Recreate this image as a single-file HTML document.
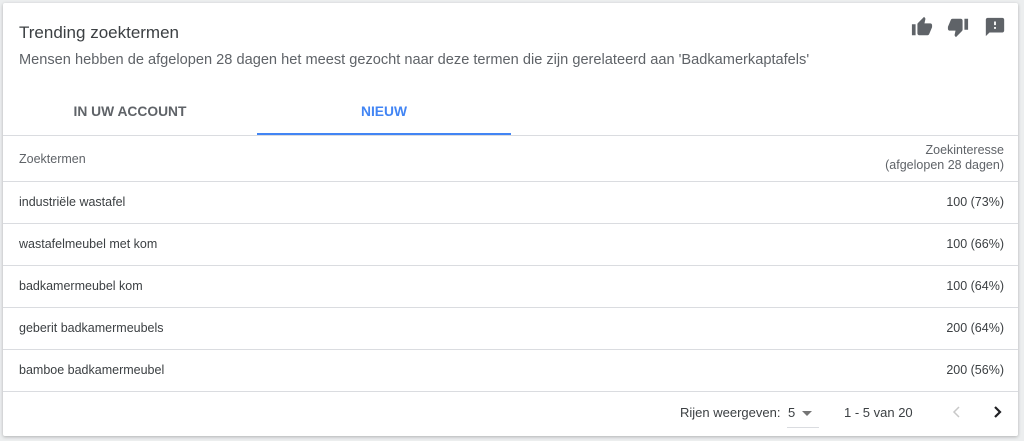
<!DOCTYPE html>
<html><head><style>
*{margin:0;padding:0;box-sizing:border-box}
body{width:1024px;height:441px;background:#eceeef;font-family:"Liberation Sans",sans-serif;position:relative;overflow:hidden}
.card{position:absolute;left:3px;top:3px;width:1015px;height:433px;background:#fff;box-shadow:0 1px 3px rgba(0,0,0,.25);border-radius:2px}
.abs{position:absolute;white-space:nowrap}
.t{left:16px;top:20px;font-size:17px;color:#3c4043}
.s{left:16px;top:49px;font-size:14.6px;color:#5f6368}
.tab{top:101px;font-size:13.8px;font-weight:bold;color:#5f6368;width:254px;text-align:center}
.ul{left:254px;top:130px;width:254px;height:2px;background:#4285f4}
.hr{position:absolute;left:0;width:1015px;height:1px;background:#dadce0}
.cell{font-size:12.5px;color:#3c4043}
.l{left:16px}.r{right:14px;text-align:right}
.ic{position:absolute;top:13px}
</style></head><body>
<div class="card">
<div class="abs t">Trending zoektermen</div>
<div class="abs s">Mensen hebben de afgelopen 28 dagen het meest gezocht naar deze termen die zijn gerelateerd aan 'Badkamerkaptafels'</div>
<svg class="ic" style="left:908px" width="22" height="22" viewBox="0 0 24 24"><path fill="#5f6368" d="M1 21h4V9H1v12zm22-11c0-1.1-.9-2-2-2h-6.3l1-4.6v-.3c0-.4-.2-.8-.4-1.1L14.2 1 7.6 7.6C7.2 7.9 7 8.4 7 9v10c0 1.1.9 2 2 2h9c.8 0 1.5-.5 1.8-1.2l3-7.1c.1-.2.2-.5.2-.7v-2z"/></svg>
<svg class="ic" style="left:944px" width="22" height="22" viewBox="0 0 24 24"><path fill="#5f6368" d="M15 3H6c-.8 0-1.5.5-1.8 1.2l-3 7.1c-.1.2-.2.5-.2.7v2c0 1.1.9 2 2 2h6.3l-1 4.6v.3c0 .4.2.8.4 1.1L9.8 23l6.6-6.6c.4-.4.6-.9.6-1.4V5c0-1.1-.9-2-2-2zm4 0v12h4V3h-4z"/></svg>
<svg class="ic" style="left:981px" width="22" height="22" viewBox="0 0 24 24"><path fill="#5f6368" d="M20 2H4c-1.1 0-2 .9-2 2v18l4-4h14c1.1 0 2-.9 2-2V4c0-1.1-.9-2-2-2zm-7 12h-2v-2h2v2zm0-4h-2V6h2v4z"/></svg>
<div class="abs tab" style="left:0">IN UW ACCOUNT</div>
<div class="abs tab" style="left:254px;color:#4285f4">NIEUW</div>
<div class="abs ul"></div>
<div class="hr" style="top:132px"></div>
<div class="abs cell l" style="top:149px;color:#5f6368">Zoektermen</div>
<div class="abs cell r" style="top:140px;color:#5f6368;line-height:15px">Zoekinteresse<br>(afgelopen 28 dagen)</div>
<div class="hr" style="top:178px"></div>
<div class="abs cell l" style="top:192px">industriële wastafel</div><div class="abs cell r" style="top:192px">100 (73%)</div>
<div class="hr" style="top:220px"></div>
<div class="abs cell l" style="top:234px">wastafelmeubel met kom</div><div class="abs cell r" style="top:234px">100 (66%)</div>
<div class="hr" style="top:262px"></div>
<div class="abs cell l" style="top:276px">badkamermeubel kom</div><div class="abs cell r" style="top:276px">100 (64%)</div>
<div class="hr" style="top:304px"></div>
<div class="abs cell l" style="top:318px">geberit badkamermeubels</div><div class="abs cell r" style="top:318px">200 (64%)</div>
<div class="hr" style="top:346px"></div>
<div class="abs cell l" style="top:360px">bamboe badkamermeubel</div><div class="abs cell r" style="top:360px">200 (56%)</div>
<div class="hr" style="top:388px"></div>
<div class="abs cell" style="left:677px;top:402px;font-size:13px">Rijen weergeven:</div>
<div class="abs cell" style="left:785px;top:402px;font-size:13px">5</div>
<div class="abs" style="left:799px;top:408px;width:0;height:0;border-left:5px solid transparent;border-right:5px solid transparent;border-top:5px solid #757575"></div>
<div class="abs" style="left:784px;top:424px;width:32px;height:1px;background:#dadce0"></div>
<div class="abs cell" style="left:841px;top:402px;font-size:13px">1 - 5 van 20</div>
<svg class="abs" style="left:946px;top:401px" width="16" height="16" viewBox="0 0 16 16"><path d="M10 3L5 8l5 5" stroke="#c8c8c8" stroke-width="1.5" fill="none"/></svg>
<svg class="abs" style="left:986px;top:401px" width="16" height="16" viewBox="0 0 16 16"><path d="M6 3l5 5-5 5" stroke="#202124" stroke-width="2.2" fill="none"/></svg>
</div>
</body></html>
